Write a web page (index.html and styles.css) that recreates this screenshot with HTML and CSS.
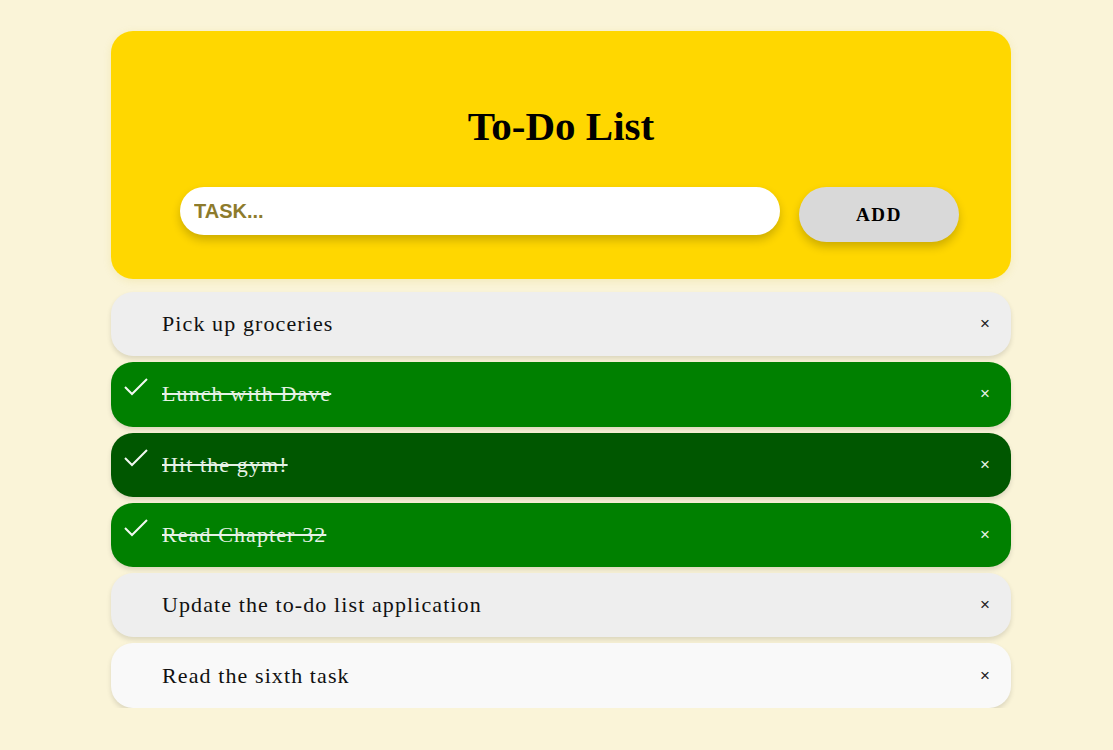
FILE: index.html
```html
<!DOCTYPE html>
<html>
<head>
<meta charset="utf-8">
<link rel="stylesheet" href="styles.css">
</head>
<body>
<div class="app">
  <header class="header">
    <h1 class="title">To-Do List</h1>
    <div class="form">
      <input class="task-input" type="text" placeholder="TASK...">
      <button class="add-btn">ADD</button>
    </div>
  </header>
  <ul class="list">
    <li class="item">Pick up groceries<span class="close">×</span></li>
    <li class="item done"><svg class="check" viewBox="0 0 24 18" width="24" height="18"><polyline points="1,9 8,16 23,1" /></svg><span class="txt">Lunch with Dave</span><span class="close">×</span></li>
    <li class="item done dark"><svg class="check" viewBox="0 0 24 18" width="24" height="18"><polyline points="1,9 8,16 23,1" /></svg><span class="txt">Hit the gym!</span><span class="close">×</span></li>
    <li class="item done"><svg class="check" viewBox="0 0 24 18" width="24" height="18"><polyline points="1,9 8,16 23,1" /></svg><span class="txt">Read Chapter 32</span><span class="close">×</span></li>
    <li class="item">Update the to-do list application<span class="close">×</span></li>
    <li class="item light">Read the sixth task<span class="close">×</span></li>
  </ul>
</div>
</body>
</html>
```
FILE: styles.css
```css
html, body {
  margin: 0;
  padding: 0;
  background: #faf4d8;
}
body {
  font-family: "Liberation Serif", "DejaVu Serif", serif;
  padding-left: 9px;
}
.app {
  width: 900px;
  margin: 31px auto 0;
}
.header {
  background: #ffd700;
  border-radius: 22px;
  padding: 73px 0 37px;
  height: 248px;
  box-sizing: border-box;
  box-shadow: 0 2px 8px rgba(200, 180, 0, 0.15);
}
.title {
  margin: 0 0 39px;
  text-align: center;
  font-size: 41px;
  line-height: 44px;
  font-weight: bold;
  color: #000;
}
.form {
  display: flex;
  align-items: flex-start;
  gap: 19px;
  margin: 0 52px 0 69px;
}
.task-input {
  flex: 1;
  height: 48px;
  border: none;
  border-radius: 25px;
  padding: 0 14px;
  font-family: "Liberation Sans", Arial, sans-serif;
  font-size: 20px;
  font-weight: bold;
  outline: none;
  box-shadow: 0 5px 10px rgba(0, 0, 0, 0.2);
  box-sizing: border-box;
}
.task-input::placeholder {
  color: #8d7b2c;
}
.add-btn {
  width: 160px;
  height: 55px;
  border: none;
  border-radius: 28px;
  background: #d9d9d9;
  font-family: "Liberation Serif", serif;
  font-weight: bold;
  font-size: 19px;
  letter-spacing: 1.6px;
  color: #000;
  box-shadow: 0 5px 10px rgba(0, 0, 0, 0.2);
}
.list {
  list-style: none;
  margin: 13px 0 0;
  padding: 0;
  display: flex;
  flex-direction: column;
  gap: 6px;
}
.item {
  position: relative;
  height: 64.3px;
  box-sizing: border-box;
  display: flex;
  align-items: center;
  padding: 0 0 0 51px;
  border-radius: 22px;
  background: #eeeeee;
  font-size: 22px;
  letter-spacing: 1.1px;
  color: #111;
  box-shadow: 0 3px 5px rgba(0, 0, 0, 0.12);
}
.item.light {
  background: #f9f9f9;
}
.item.done {
  background: #008000;
  color: #e6f2e6;
}
.item.done.dark {
  background: #005700;
}
.item.done .txt {
  text-decoration: line-through;
}
.check {
  position: absolute;
  left: 13px;
  top: 16px;
  fill: none;
  stroke: #f2f8f2;
  stroke-width: 2;
}
.close {
  position: absolute;
  right: 21px;
  top: 50%;
  transform: translateY(-50%);
  font-family: "Liberation Sans", Arial, sans-serif;
  font-size: 17px;
  letter-spacing: 0;
  color: #222;
}
.item.done .close {
  color: #e6f2e6;
}
```
